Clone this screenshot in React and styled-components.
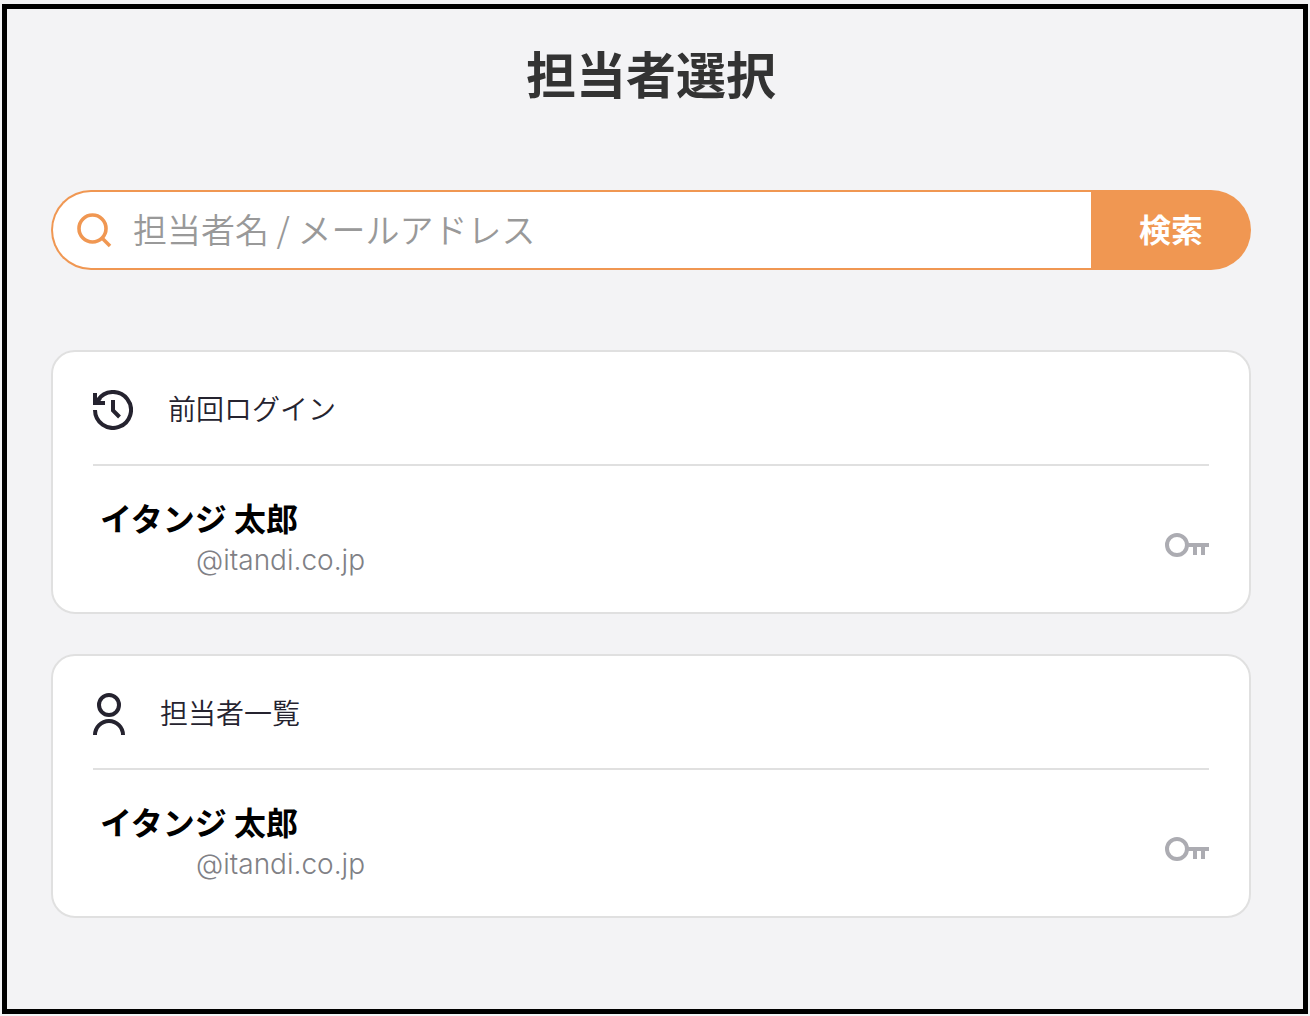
import React, { useState } from 'react';
import { createGlobalStyle, css, styled } from 'styled-components';

const GlobalStyle = createGlobalStyle`
  * {
    box-sizing: border-box;
  }

  body {
    margin: 0;
    background: #f3f3f5;
    font-family: 'Noto Sans CJK JP', sans-serif;
  }
`;

const sections = [
  {
    id: 'last',
    title: '前回ログイン',
    Icon: HistoryIcon,
    users: [{ name: 'イタンジ 太郎', mail: '@itandi.co.jp' }]
  },
  {
    id: 'all',
    title: '担当者一覧',
    Icon: PersonIcon,
    users: [{ name: 'イタンジ 太郎', mail: '@itandi.co.jp' }]
  }
];

function App() {
  const [keyword, setKeyword] = useState('');

  const onSubmit = (e) => {
    e.preventDefault();
  };

  return (
    <>
      <GlobalStyle />
      <Layout>
        <Title>担当者選択</Title>
        <SearchForm onSubmit={onSubmit} role="search">
          <SearchLabel htmlFor="keyword">
            <SearchIcon />
          </SearchLabel>
          <SearchInput
            id="keyword"
            type="text"
            aria-label="担当者名 / メールアドレス"
            placeholder="担当者名 / メールアドレス"
            value={keyword}
            onChange={(e) => setKeyword(e.target.value)}
          />
          <SearchBtn type="submit">検索</SearchBtn>
        </SearchForm>
        <Cards>
          {sections.map(({ id, title, Icon, users }) => (
            <Card key={id}>
              <CardHeader>
                <IconBox>
                  <Icon />
                </IconBox>
                <CardTitle>{title}</CardTitle>
              </CardHeader>
              <UserList>
                {users.map((user) => (
                  <UserRow key={user.mail}>
                    <UserInfo>
                      <UserName>{user.name}</UserName>
                      <UserMail>{user.mail}</UserMail>
                    </UserInfo>
                    <KeyBtn type="button" aria-label="ログイン">
                      <KeyIcon />
                    </KeyBtn>
                  </UserRow>
                ))}
              </UserList>
            </Card>
          ))}
        </Cards>
      </Layout>
    </>
  );
}

function SearchIcon() {
  return (
    <Svg width="36" height="36" viewBox="0 0 36 36" strokeWidth="3.6">
      <circle cx="15.5" cy="16.5" r="13.5" />
      <path d="M25 26L33 34" />
    </Svg>
  );
}

function HistoryIcon() {
  return (
    <Svg width="40" height="40" viewBox="0 0 40 40" strokeWidth="4">
      <path d="M2 20A18 18 0 1 0 5 10" />
      <path d="M2 3V13H12" />
      <path d="M4 12L7 8" />
      <path d="M20 10V20.5L26.5 27" />
    </Svg>
  );
}

function PersonIcon() {
  return (
    <Svg width="32" height="42" viewBox="0 0 32 42" strokeWidth="4">
      <circle cx="16" cy="12" r="10" />
      <path d="M2 42A14 14 0 0 1 30 42" />
    </Svg>
  );
}

function KeyIcon() {
  return (
    <Svg width="44" height="24" viewBox="0 0 44 24" strokeWidth="4">
      <circle cx="12" cy="12" r="10" />
      <path d="M23 12H44M30 12V22M38 12V22" />
    </Svg>
  );
}

const Center = css`
  display: flex;
  justify-content: center;
  align-items: center;
`;

const Svg = styled.svg`
  display: block;
  flex-shrink: 0;
  fill: none;
  stroke: currentColor;
`;

const Layout = styled.main`
  min-height: calc(100vh - 6px);
  margin: 4px 2px 2px;
  padding: 28px 52px 40px 44px;
  border: 5px solid #000;
`;

const Title = styled.h1`
  margin: 0 0 82px;
  color: #333;
  font-size: 50px;
  font-weight: 700;
  line-height: 71px;
  text-align: center;
`;

const SearchForm = styled.form`
  display: flex;
  height: 80px;
  margin-bottom: 80px;
`;

const SearchLabel = styled.label`
  ${Center}
  padding: 0 20px 0 24px;
  border: 2px solid #f09752;
  border-right: none;
  border-radius: 40px 0 0 40px;
  background: #fff;
  color: #f09752;
`;

const SearchInput = styled.input`
  flex: 1;
  min-width: 0;
  padding: 0 0 4px;
  border: solid #f09752;
  border-width: 2px 0;
  border-radius: 0;
  outline: none;
  background: #fff;
  color: #333;
  font-family: inherit;
  font-size: 34px;
  font-weight: 350;

  &::placeholder {
    color: #999;
    opacity: 1;
  }
`;

const SearchBtn = styled.button`
  width: 160px;
  padding: 0 0 4px;
  border: none;
  border-radius: 0 40px 40px 0;
  background: #f09752;
  color: #fff;
  font-family: inherit;
  font-size: 32px;
  font-weight: 700;
  cursor: pointer;
`;

const Cards = styled.div`
  display: flex;
  flex-direction: column;
  gap: 40px;
`;

const Card = styled.section`
  padding: 0 40px;
  border: 2px solid #e0e0e0;
  border-radius: 24px;
  background: #fff;
`;

const CardHeader = styled.div`
  display: flex;
  align-items: center;
  gap: 35px;
  height: 114px;
  border-bottom: 2px solid #e0e0e0;
  color: #25232f;
`;

const IconBox = styled.span`
  padding-top: 4px;
`;

const CardTitle = styled.h2`
  margin: 0;
  font-size: 28px;
  font-weight: 350;
  line-height: 40px;
`;

const UserList = styled.ul`
  margin: 0;
  padding: 0;
  list-style: none;
`;

const UserRow = styled.li`
  display: flex;
  justify-content: space-between;
  align-items: center;
  min-height: 146px;
  padding-left: 7px;
`;

const UserInfo = styled.div`
  display: flex;
  flex-direction: column;
`;

const UserName = styled.span`
  color: #000;
  font-size: 32px;
  font-weight: 700;
  line-height: 42px;
`;

const UserMail = styled.span`
  padding-left: 96px;
  color: #808085;
  font-family: Inter, 'Noto Sans CJK JP', sans-serif;
  font-size: 28px;
  font-weight: 300;
  line-height: 44px;
`;

const KeyBtn = styled.button`
  padding: 12px 0 0;
  border: none;
  background: transparent;
  color: #acacb2;
  cursor: pointer;
`;

export default App;
